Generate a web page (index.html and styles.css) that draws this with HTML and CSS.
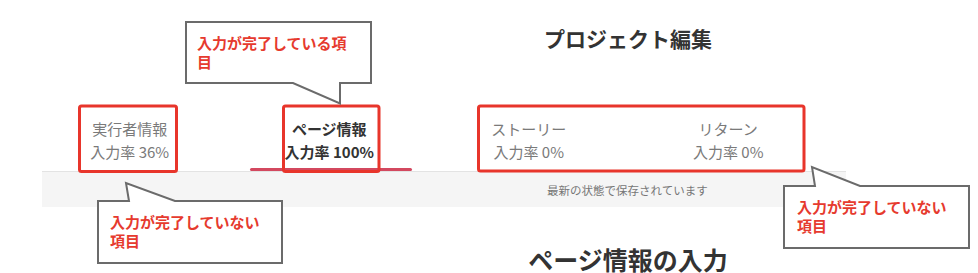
FILE: index.html
```html
<!DOCTYPE html>
<html lang="ja">
<head>
<meta charset="utf-8">
<link rel="stylesheet" href="styles.css">
</head>
<body>
<div class="page">
  <div class="main-col">
    <h1 class="title">プロジェクト編集</h1>
  </div>
  <nav class="tabs">
    <div class="tab"><span class="tab-name">実行者情報</span><span class="tab-rate">入力率 36%</span><span class="indicator"></span></div>
    <div class="tab active"><span class="tab-name">ページ情報</span><span class="tab-rate">入力率 100%</span><span class="indicator"></span></div>
    <div class="tab"><span class="tab-name">ストーリー</span><span class="tab-rate">入力率 0%</span><span class="indicator"></span></div>
    <div class="tab"><span class="tab-name">リターン</span><span class="tab-rate">入力率 0%</span><span class="indicator"></span></div>
  </nav>
  <div class="status-band"><span class="status-text">最新の状態で保存されています</span></div>
  <div class="main-col">
    <h2 class="heading">ページ情報の入力</h2>
  </div>

  <svg class="annotations" width="978" height="273" viewBox="0 0 978 273">
    <rect class="hl" x="79.5" y="106" width="97" height="65.5" rx="2"/>
    <rect class="hl" x="283.5" y="106" width="95.5" height="65.5" rx="2"/>
    <rect class="hl" x="478.5" y="106" width="325.5" height="65" rx="2"/>
    <path class="bubble" d="M186,22 H371 V83 H340 V103.5 L293,83 H186 Z"/>
    <path class="bubble" d="M98,201 H129 L126,183 L175,201 H282 V263 H98 Z"/>
    <path class="bubble" d="M784,186 H815 L812,167 L860,186 H969 V248 H784 Z"/>
  </svg>
  <div class="note note-done">入力が完了している項目</div>
  <div class="note note-left">入力が完了していない項目</div>
  <div class="note note-right">入力が完了していない項目</div>
</div>
</body>
</html>
```
FILE: styles.css
```css
* { box-sizing: border-box; }
html, body { margin: 0; padding: 0; background: #fff; }
body {
  font-family: "Noto Sans CJK JP", "Noto Sans", sans-serif;
  color: #333;
}
.page {
  position: relative;
  width: 978px;
  height: 273px;
  overflow: hidden;
}
.main-col {
  width: 396px;
  margin-left: 430px;
  text-align: center;
}
.title {
  margin: 0;
  padding-top: 24px;
  font-size: 21px;
  line-height: 28px;
  font-weight: 700;
  color: #333;
}
.tabs {
  display: flex;
  margin-left: 30px;
  margin-top: 53px;
}
.tab {
  width: 199.5px;
  height: 66px;
  padding-top: 12px;
  display: flex;
  flex-direction: column;
  align-items: center;
  font-size: 15px;
  line-height: 23px;
  color: #7a7a7a;
}
.tab-name, .tab-rate { display: block; white-space: nowrap; }
.indicator {
  display: block;
  width: 162px;
  height: 3px;
  margin-top: 5px;
  margin-left: 3px;
  border-radius: 2px;
  background: transparent;
}
.tab.active { color: #333; font-weight: 700; }
.tab.active .indicator { background: #d3485f; }
.status-band {
  margin-left: 42px;
  width: 804px;
  height: 36px;
  border-top: 1px solid #e3e3e3;
  background: #f5f5f5;
  padding-left: 505px;
  padding-top: 2px;
  font-size: 11.5px;
  line-height: 33px;
  color: #777;
}
.heading {
  margin: 39px 0 0;
  font-size: 25px;
  line-height: 26px;
  font-weight: 700;
  color: #333;
}
.annotations {
  position: absolute;
  left: 0;
  top: 0;
  pointer-events: none;
}
.hl {
  fill: none;
  stroke: #e8352b;
  stroke-width: 3;
}
.bubble {
  fill: #fff;
  stroke: #6b6b6b;
  stroke-width: 2;
  stroke-linejoin: miter;
}
.note {
  position: absolute;
  width: 162px;
  font-size: 15px;
  line-height: 19px;
  font-weight: 700;
  color: #e63a2e;
}
.note-done { left: 197px; top: 33px; }
.note-left { left: 110px; top: 212px; }
.note-right { left: 797px; top: 197px; }
```
